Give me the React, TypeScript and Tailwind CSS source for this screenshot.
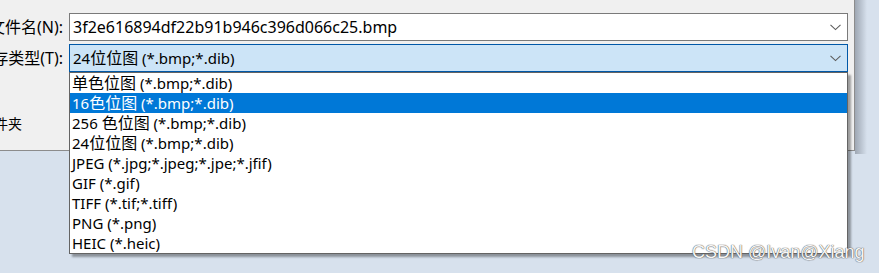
const fileTypes = [
  "单色位图 (*.bmp;*.dib)",
  "16色位图 (*.bmp;*.dib)",
  "256 色位图 (*.bmp;*.dib)",
  "24位位图 (*.bmp;*.dib)",
  "JPEG (*.jpg;*.jpeg;*.jpe;*.jfif)",
  "GIF (*.gif)",
  "TIFF (*.tif;*.tiff)",
  "PNG (*.png)",
  "HEIC (*.heic)",
];

// the dialog font draws CJK a little larger than the latin glyphs
const Label = ({ text }: { text: string }) => (
  <span>
    {text.split(/([\u4e00-\u9fff]+)/).map((part, i) =>
      /[\u4e00-\u9fff]/.test(part) ? (
        <span key={i} className="text-[16px]">
          {part}
        </span>
      ) : (
        <span key={i}>{part}</span>
      )
    )}
  </span>
);

const Chevron = () => (
  <svg width="11" height="7" viewBox="0 0 11 7" className="shrink-0">
    <path d="M0.5 0.8 L5.5 5.6 L10.5 0.8" fill="none" stroke="#5c5c5c" strokeWidth="1.1" />
  </svg>
);

const App = () => {
  const hovered = 1;

  return (
    <div className="relative w-[879px] h-[273px] overflow-hidden bg-[#d7e1ed] text-black font-['Noto_Sans','Noto_Sans_CJK_SC',sans-serif]">
      <div className="flex">
        <div className="w-[855px] h-[151px] bg-[#f0f0f0] border-r border-b border-[#8c8c8c] overflow-hidden pt-[13px]">
          {/* file name */}
          <div className="flex items-center">
            <div className="w-[63px] flex justify-end whitespace-nowrap text-[16px] leading-none">文件名(N):</div>
            <div className="ml-[6px] w-[779px] h-[28px] bg-white border border-[#7a7a7a] flex items-center justify-between pl-[3px] pr-[6px]">
              <span className="text-[16px] leading-none">3f2e616894df22b91b946c396d066c25.bmp</span>
              <Chevron />
            </div>
          </div>
          {/* save type */}
          <div className="flex items-center mt-[3px]">
            <div className="w-[63px] flex justify-end whitespace-nowrap text-[16px] leading-none">保存类型(T):</div>
            <div className="ml-[6px] w-[779px] h-[28px] bg-[#cce4f7] border border-[#0058a8] flex items-center justify-between pl-[3px] pr-[6px]">
              <span className="text-[15px] leading-none">
                <Label text="24位位图 (*.bmp;*.dib)" />
              </span>
              <Chevron />
            </div>
          </div>
          <div className="flex mt-[45px]">
            <div className="w-[22px] flex justify-end whitespace-nowrap text-[14px] leading-none">隐藏文件夹</div>
          </div>
        </div>
        <div className="w-[12px] h-[154px] bg-gradient-to-r from-[#9ea7b3] to-[#d7e1ed]" />
      </div>

      {/* open dropdown list */}
      <div className="absolute left-[69px] top-[72px] w-[779px] bg-white border border-[#646464] shadow-[3px_3px_2px_rgba(0,0,0,0.35)]">
        {fileTypes.map((t, i) => (
          <div
            key={t}
            className={`h-[20px] flex items-center pl-[2px] text-[15px] leading-none whitespace-nowrap ${
              i === hovered ? "bg-[#0078d7] text-white" : ""
            }`}
          >
            <Label text={t} />
          </div>
        ))}
      </div>

      <div className="absolute left-[692px] top-[243px] text-[18px] leading-none text-[#f6f6f6] font-['Liberation_Sans',sans-serif] [text-shadow:0_0_1px_#555,0_0_1px_#555]">
        CSDN @Ivan@Xiang
      </div>
    </div>
  );
};

export default App;
